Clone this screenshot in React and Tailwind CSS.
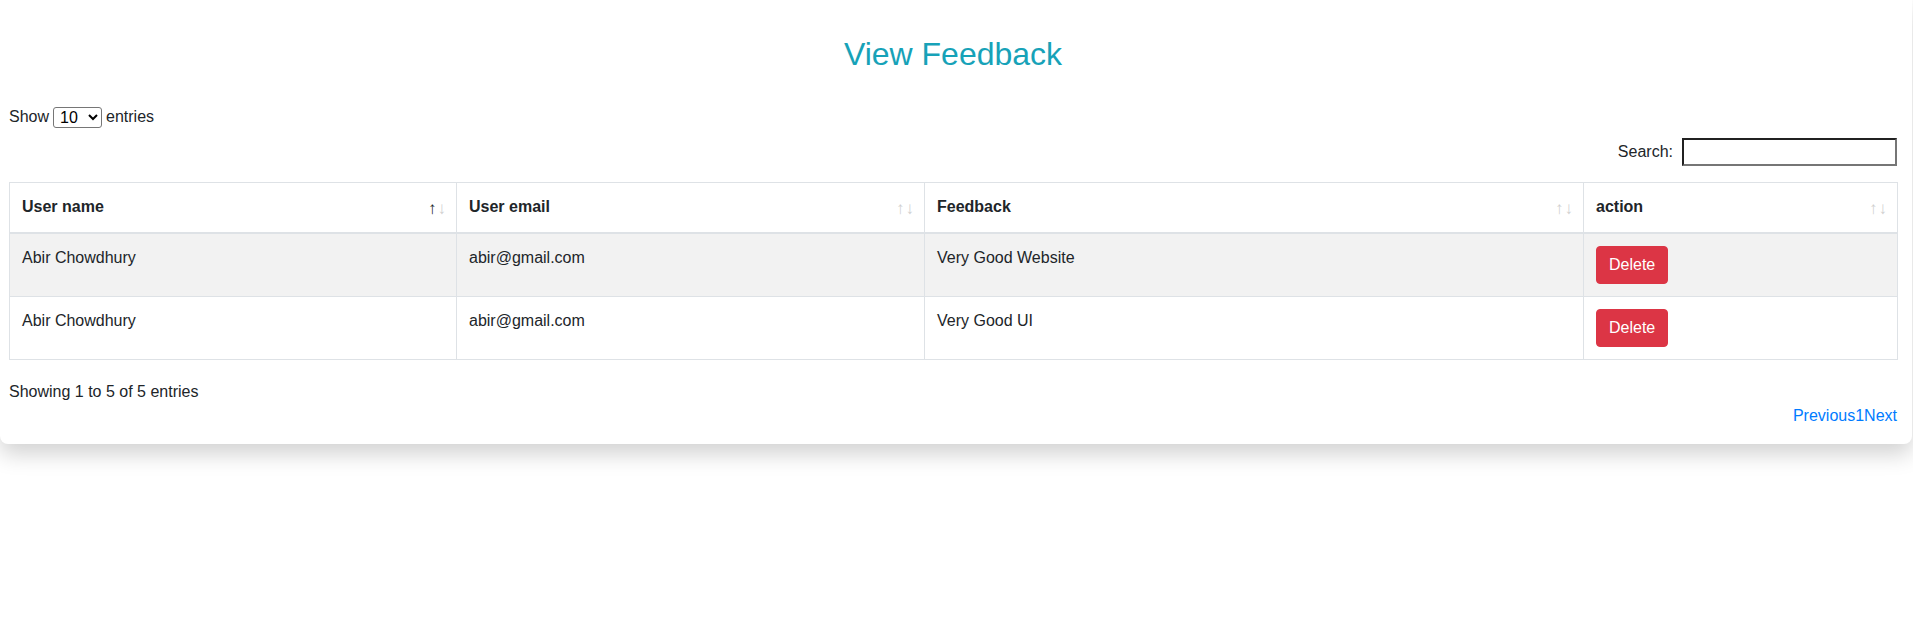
import React from "react";

const rows = [
  { name: "Abir Chowdhury", email: "abir@gmail.com", feedback: "Very Good Website" },
  { name: "Abir Chowdhury", email: "abir@gmail.com", feedback: "Very Good UI" },
];

function Arrows({ active }) {
  return (
    <span className="absolute right-[10px] top-1/2 -translate-y-1/2 text-[17px] leading-none font-normal flex gap-[1px]">
      <span className={active ? "text-[#212529]" : "text-[#d0d0d0]"}>↑</span>
      <span className="text-[#d0d0d0]">↓</span>
    </span>
  );
}

export default function App() {
  const font = { fontFamily: '"Liberation Sans", Arial, sans-serif' };
  const heads = [
    { t: "User name", w: "w-[447px]", active: true },
    { t: "User email", w: "w-[468px]" },
    { t: "Feedback", w: "w-[659px]" },
    { t: "action", w: "w-[314px]" },
  ];
  return (
    <div className="bg-white min-h-[636px] text-[#212529] text-base" style={font}>
      <div className="w-[1912px] bg-white rounded-b-lg shadow-[0_10px_22px_rgba(0,0,0,0.18)] pl-[9px] pr-[15px] pt-[35px] pb-[16px]">
        <h1 className="text-center text-[32px] leading-[38px] text-[#17a2b8] font-normal">View Feedback</h1>

        <div className="mt-[32px] flex items-center h-[24px]">
          <span>Show</span>
          <select
            className="mx-[4px] h-[21px] w-[49px] border border-[#767676] rounded-[3px] bg-white text-[16px] pl-[2px] text-black"
            style={{ fontFamily: '"Liberation Sans", Arial, sans-serif' }}
            defaultValue="10"
          >
            <option>10</option>
            <option>25</option>
            <option>50</option>
            <option>100</option>
          </select>
          <span>entries</span>
        </div>

        <div className="mt-[9px] flex items-center justify-end h-[28px]">
          <span className="mr-[9px]">Search:</span>
          <input className="w-[215px] h-[28px] border-2 [border-style:inset] border-[#767676] bg-white outline-none" />
        </div>

        <table className="mt-[16px] w-[1888px] table-fixed border-collapse border border-[#dee2e6]">
          <thead>
            <tr>
              {heads.map((h) => (
                <th
                  key={h.t}
                  className={`${h.w} relative text-left font-bold px-3 pt-3 pb-[13px] leading-6 border border-[#dee2e6] border-b-2`}
                >
                  {h.t}
                  <Arrows active={h.active} />
                </th>
              ))}
            </tr>
          </thead>
          <tbody>
            {rows.map((r, i) => (
              <tr key={i} className={i % 2 === 0 ? "bg-[#f2f2f2]" : "bg-white"}>
                <td className="align-top px-3 py-3 leading-6 border border-[#dee2e6]">{r.name}</td>
                <td className="align-top px-3 py-3 leading-6 border border-[#dee2e6]">{r.email}</td>
                <td className="align-top px-3 py-3 leading-6 border border-[#dee2e6]">{r.feedback}</td>
                <td className="align-top px-3 py-3 leading-6 border border-[#dee2e6]">
                  <button className="block h-[38px] px-3 rounded-[4px] border border-[#dc3545] bg-[#dc3545] text-white text-base leading-6">
                    Delete
                  </button>
                </td>
              </tr>
            ))}
          </tbody>
        </table>

        <div className="mt-[20px] leading-6">Showing 1 to 5 of 5 entries</div>
        <div className="flex justify-end leading-6 text-[#007bff]">
          <span>Previous</span>
          <span>1</span>
          <span>Next</span>
        </div>
      </div>
    </div>
  );
}
